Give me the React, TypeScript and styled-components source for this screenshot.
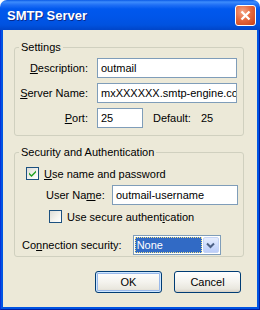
import styled, { createGlobalStyle } from "styled-components";

const Global = createGlobalStyle`
  html, body {
    margin: 0;
    padding: 0;
    background: #ffffff;
  }
  * { box-sizing: border-box; }
`;

const Window = styled.div`
  width: 260px;
  height: 310px;
  display: flex;
  flex-direction: column;
  font-family: "Liberation Sans", Arial, sans-serif;
  font-size: 11px;
  color: #000;
`;

const TitleBar = styled.div`
  height: 30px;
  flex: none;
  display: flex;
  align-items: center;
  justify-content: space-between;
  padding: 0 4px 0 7px;
  border-radius: 7px 7px 0 0;
  background: linear-gradient(
    to bottom,
    #0a5ae6 0px,
    #3d8cfc 2px,
    #1f6ff5 5px,
    #0058ee 9px,
    #0055e8 18px,
    #0052df 25px,
    #0045c8 30px
  );
`;

const Title = styled.span`
  font-weight: bold;
  font-size: 13px;
  color: #fff;
  text-shadow: 1px 1px 0 #0a2a8a;
  margin-top: 1px;
`;

const CloseButton = styled.div`
  width: 21px;
  height: 21px;
  border: 1px solid #fff;
  border-radius: 3px;
  background: radial-gradient(circle at 35% 30%, #f5a486 0%, #e56a40 45%, #c73f17 100%);
  display: flex;
  align-items: center;
  justify-content: center;
  margin-top: 1px;
`;

const Frame = styled.div`
  flex: 1;
  display: flex;
  background: #0054e3;
  border-left: 1px solid #0831d9;
  border-right: 1px solid #001ea0;
  border-bottom: 1px solid #001ea0;
  padding: 0 2px 2px 2px;
`;

const Client = styled.div`
  flex: 1;
  background: #ece9d8;
  display: flex;
  flex-direction: column;
  padding: 11px 13px 0 11px;
`;

const Group = styled.fieldset<{ $height: number; $gap?: number }>`
  margin: ${(p) => p.$gap ?? 0}px 0 0 0;
  padding: 0;
  height: ${(p) => p.$height}px;
  border: 1px solid #d0d0bf;
  border-radius: 3px;
  min-width: 0;
`;

const Legend = styled.legend`
  margin-left: 4px;
  padding: 0 2px;
  color: #000;
`;

const FieldGrid = styled.div`
  display: grid;
  grid-template-columns: 73px 1fr;
  column-gap: 9px;
  row-gap: 5px;
  align-items: center;
  padding: 5px 5px 0 0;
`;

const FieldLabel = styled.label`
  text-align: right;
  white-space: nowrap;
`;

const Input = styled.div<{ $width?: number }>`
  width: ${(p) => (p.$width ? `${p.$width}px` : "140px")};
  height: 20px;
  border: 1px solid #7f9db9;
  background: #fff;
  padding: 0 3px;
  display: flex;
  align-items: center;
  white-space: nowrap;
  overflow: hidden;
`;

const PortRow = styled.div`
  display: flex;
  align-items: center;
  gap: 10px;
`;

const Ul = styled.span`
  text-decoration: underline;
`;

const SecurityBody = styled.div`
  display: flex;
  flex-direction: column;
  padding: 9px 5px 0 11px;
`;

const CheckRow = styled.div<{ $indent?: number }>`
  display: flex;
  align-items: center;
  gap: 5px;
  height: 13px;
  margin-left: ${(p) => p.$indent ?? 0}px;
`;

const Box = styled.div`
  width: 13px;
  height: 13px;
  border: 1px solid #1c5180;
  background: linear-gradient(135deg, #dcdcd7 0%, #f5f4ef 60%, #ffffff 100%);
  display: flex;
  align-items: center;
  justify-content: center;
`;

const UserRow = styled.div`
  display: flex;
  align-items: center;
  justify-content: space-between;
  margin: 5px 0 5px 20px;
`;

const ConnRow = styled.div`
  display: flex;
  align-items: center;
  gap: 11px;
  margin: 12px 0 0 -4px;
`;

const Select = styled.div`
  width: 88px;
  height: 20px;
  border: 1px solid #7f9db9;
  background: #fff;
  display: flex;
  padding: 1px;
  gap: 1px;
`;

const SelectValue = styled.div`
  flex: 1;
  background: #316ac5;
  color: #fff;
  outline: 1px dotted #f2e38a;
  outline-offset: -1px;
  padding-left: 2px;
  display: flex;
  align-items: center;
`;

const DropButton = styled.div`
  width: 16px;
  border-radius: 2px;
  border: 1px solid #c5d4f5;
  background: linear-gradient(to bottom, #e6edfd 0%, #cbdafc 60%, #bccdf8 100%);
  display: flex;
  align-items: center;
  justify-content: center;
`;

const ButtonRow = styled.div`
  display: flex;
  justify-content: flex-end;
  gap: 12px;
  margin-top: 14px;
  padding-right: 3px;
`;

const Button = styled.div<{ $default?: boolean }>`
  width: 67px;
  height: 22px;
  border: 1px solid #003c74;
  border-radius: 3px;
  background: linear-gradient(to bottom, #ffffff 0%, #f4f3ee 50%, #e9e7de 85%, #d6d0c5 100%);
  display: flex;
  align-items: center;
  justify-content: center;
  box-shadow: ${(p) =>
    p.$default ? "inset 0 0 0 1px #cee7ff, inset 0 0 0 2px #98b8ea" : "none"};
`;

function Check() {
  return (
    <svg width="9" height="9" viewBox="0 0 9 9">
      <path d="M1 3.5 L3.5 6 L8 1.5 L8 3.5 L3.5 8 L1 5.5 Z" fill="#21a121" />
    </svg>
  );
}

function App() {
  return (
    <>
      <Global />
      <Window>
        <TitleBar>
          <Title>SMTP Server</Title>
          <CloseButton>
            <svg width="11" height="11" viewBox="0 0 11 11">
              <path d="M1.5 1.5 L9.5 9.5 M9.5 1.5 L1.5 9.5" stroke="#fff" strokeWidth="2.3" />
            </svg>
          </CloseButton>
        </TitleBar>
        <Frame>
          <Client>
            <Group $height={95}>
              <Legend>Settings</Legend>
              <FieldGrid>
                <FieldLabel>
                  <Ul>D</Ul>escription:
                </FieldLabel>
                <Input>outmail</Input>
                <FieldLabel>
                  <Ul>S</Ul>erver Name:
                </FieldLabel>
                <Input>mxXXXXXX.smtp-engine.co</Input>
                <FieldLabel>
                  <Ul>P</Ul>ort:
                </FieldLabel>
                <PortRow>
                  <Input $width={46}>25</Input>
                  <span>Default:</span>
                  <span>25</span>
                </PortRow>
              </FieldGrid>
            </Group>
            <Group $height={111} $gap={10}>
              <Legend>Security and Authentication</Legend>
              <SecurityBody>
                <CheckRow>
                  <Box>
                    <Check />
                  </Box>
                  <span>
                    <Ul>U</Ul>se name and password
                  </span>
                </CheckRow>
                <UserRow>
                  <span>
                    User Na<Ul>m</Ul>e:
                  </span>
                  <Input $width={126}>outmail-username</Input>
                </UserRow>
                <CheckRow $indent={23}>
                  <Box />
                  <span>
                    Use secure authent<Ul>i</Ul>cation
                  </span>
                </CheckRow>
                <ConnRow>
                  <span>
                    Co<Ul>n</Ul>nection security:
                  </span>
                  <Select>
                    <SelectValue>None</SelectValue>
                    <DropButton>
                      <svg width="9" height="7" viewBox="0 0 9 7">
                        <path d="M1 1.5 L4.5 5 L8 1.5" stroke="#4d6185" strokeWidth="2" fill="none" />
                      </svg>
                    </DropButton>
                  </Select>
                </ConnRow>
              </SecurityBody>
            </Group>
            <ButtonRow>
              <Button $default>OK</Button>
              <Button>Cancel</Button>
            </ButtonRow>
          </Client>
        </Frame>
      </Window>
    </>
  );
}

export default App;
